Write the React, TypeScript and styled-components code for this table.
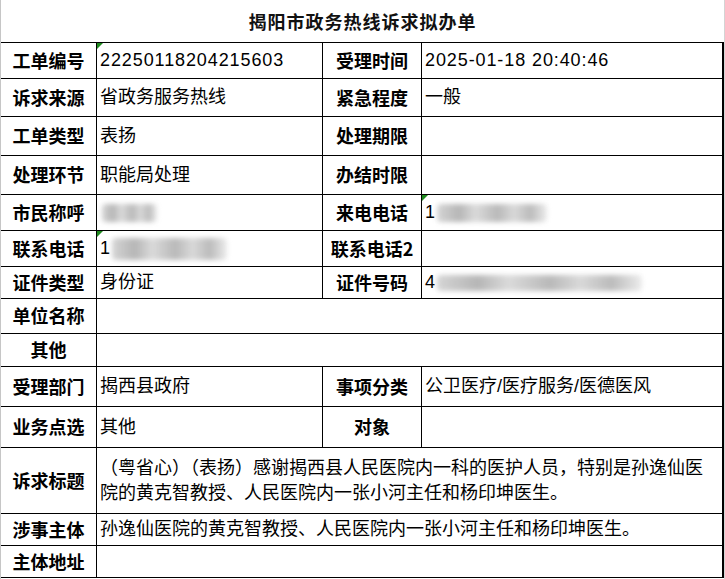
import React from "react";
import styled, { createGlobalStyle, css } from "styled-components";

const Global = createGlobalStyle`
  html, body { margin: 0; padding: 0; background: #ffffff; }
  #root { width: 725px; }
`;

const Sheet = styled.div`
  width: 725px;
  height: 579px;
  box-sizing: border-box;
  border-left: 1px solid #c6c6c6;
  border-right: 1px solid #d4d4d4;
  background: #fff;
  overflow: hidden;
`;

const Title = styled.div`
  height: 42px;
  display: flex;
  align-items: center;
  justify-content: center;
  font-family: "Noto Sans CJK SC", sans-serif;
  font-weight: 700;
  font-size: 18px;
  letter-spacing: 1px;
  color: #111;
`;

const rowHeights = [36, 38, 39, 39, 36, 36, 32, 35, 33, 40, 41, 66, 32, 32];

const Table = styled.div`
  display: grid;
  grid-template-columns: 96px 226px 99px 302px;
  grid-template-rows: ${rowHeights.map((h) => `${h}px`).join(" ")};
  border-top: 1px solid #000;
`;

const cellBase = css<{ $span?: number; $last?: boolean }>`
  box-sizing: border-box;
  position: relative;
  display: flex;
  align-items: center;
  border-bottom: 1px solid #000;
  border-right: ${(p) => (p.$last ? "2px" : "1px")} solid #000;
  grid-column: span ${(p) => p.$span ?? 1};
  color: #000;
  font-size: 18px;
`;

const Label = styled.div<{ $span?: number; $last?: boolean }>`
  ${cellBase};
  justify-content: center;
  padding-bottom: 2px;
  font-family: "Noto Sans CJK SC", sans-serif;
  font-weight: 700;
  white-space: nowrap;
`;

const Value = styled.div<{ $span?: number; $last?: boolean; $flag?: boolean; $digits?: boolean }>`
  ${cellBase};
  padding: 0 4px 0 3px;
  font-family: "Liberation Sans", "Noto Sans CJK SC", sans-serif;
  font-weight: 400;
  line-height: 25px;
  letter-spacing: ${(p) => (p.$digits ? "0.9px" : "0")};
  ${(p) =>
    p.$flag &&
    css`
      &::before {
        content: "";
        position: absolute;
        left: 0;
        top: 0;
        border-top: 6px solid #1f8a1f;
        border-right: 6px solid transparent;
      }
    `}
`;

const Blur = styled.span<{ $w: number; $h?: number }>`
  display: inline-block;
  width: ${(p) => p.$w}px;
  height: ${(p) => p.$h ?? 20}px;
  margin-left: 2px;
  border-radius: 4px;
  background: linear-gradient(
    90deg,
    #cbcbcb 0%,
    #a4a4a4 20%,
    #d2d2d2 35%,
    #a8a8a8 55%,
    #d0d0d0 70%,
    #ababab 85%,
    #e8e8e8 100%
  );
  filter: blur(2.5px);
  opacity: 0.8;
`;

type Cell =
  | { kind: "label"; text: string; span?: number; last?: boolean }
  | {
      kind: "value";
      text?: React.ReactNode;
      span?: number;
      last?: boolean;
      flag?: boolean;
      digits?: boolean;
    };

const L = (text: string, last?: boolean): Cell => ({ kind: "label", text, last });
const V = (
  text: React.ReactNode,
  opts: { span?: number; last?: boolean; flag?: boolean; digits?: boolean } = {}
): Cell => ({ kind: "value", text, ...opts });

const rows: Cell[][] = [
  [L("工单编号"), V("22250118204215603", { flag: true, digits: true }), L("受理时间"), V("2025-01-18 20:40:46", { last: true, digits: true })],
  [L("诉求来源"), V("省政务服务热线"), L("紧急程度"), V("一般", { last: true })],
  [L("工单类型"), V("表扬"), L("处理期限"), V("", { last: true })],
  [L("处理环节"), V("职能局处理"), L("办结时限"), V("", { last: true })],
  [
    L("市民称呼"),
    V(<Blur $w={55} $h={18} />),
    L("来电电话"),
    V(
      <>
        1<Blur $w={110} $h={18} />
      </>,
      { last: true, flag: true }
    ),
  ],
  [
    L("联系电话"),
    V(
      <>
        1<Blur $w={115} $h={22} />
      </>,
      { flag: true }
    ),
    L("联系电话2"),
    V("", { last: true }),
  ],
  [
    L("证件类型"),
    V("身份证"),
    L("证件号码"),
    V(
      <>
        4<Blur $w={205} $h={16} />
      </>,
      { last: true }
    ),
  ],
  [L("单位名称"), V("", { span: 3, last: true })],
  [L("其他"), V("", { span: 3, last: true })],
  [L("受理部门"), V("揭西县政府"), L("事项分类"), V("公卫医疗/医疗服务/医德医风", { last: true })],
  [L("业务点选"), V("其他"), L("对象"), V("", { last: true })],
  [
    L("诉求标题"),
    V(
      "（粤省心）（表扬）感谢揭西县人民医院内一科的医护人员，特别是孙逸仙医院的黄克智教授、人民医院内一张小河主任和杨印坤医生。",
      { span: 3, last: true }
    ),
  ],
  [L("涉事主体"), V("孙逸仙医院的黄克智教授、人民医院内一张小河主任和杨印坤医生。", { span: 3, last: true })],
  [L("主体地址"), V("", { span: 3, last: true })],
];

export default function App() {
  return (
    <>
      <Global />
      <Sheet>
        <Title>揭阳市政务热线诉求拟办单</Title>
        <Table>
          {rows.map((row, ri) =>
            row.map((c, ci) =>
              c.kind === "label" ? (
                <Label key={`${ri}-${ci}`} $last={c.last}>
                  {c.text}
                </Label>
              ) : (
                <Value
                  key={`${ri}-${ci}`}
                  $span={c.span}
                  $last={c.last}
                  $flag={c.flag}
                  $digits={c.digits}
                >
                  {c.text}
                </Value>
              )
            )
          )}
        </Table>
      </Sheet>
    </>
  );
}
